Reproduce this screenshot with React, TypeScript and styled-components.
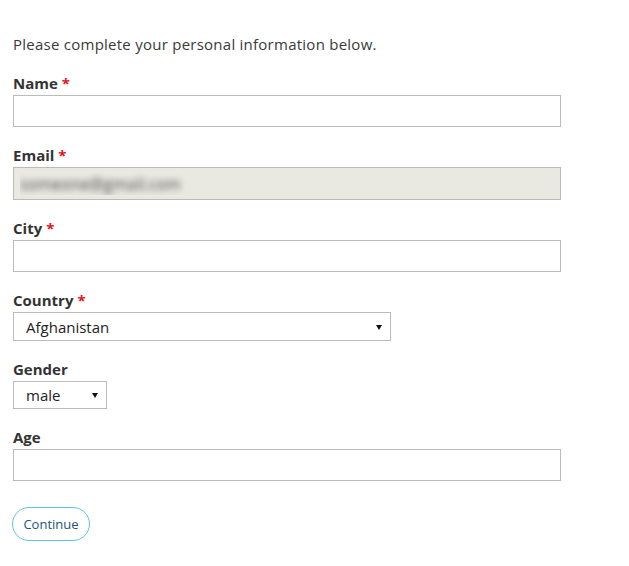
import styled, { createGlobalStyle } from "styled-components";

const GlobalStyle = createGlobalStyle`
	body {
		margin: 0;
		background: #fff;
		font-family: "Open Sans", "DejaVu Sans", sans-serif;
		color: #333;
	}
`;

type Field = {
	label: string;
	required?: boolean;
	kind: "text" | "email" | "select";
	options?: string[];
	width?: number;
	height?: number;
};

const fields: Field[] = [
	{ label: "Name", required: true, kind: "text" },
	{ label: "Email", required: true, kind: "email" },
	{ label: "City", required: true, kind: "text" },
	{ label: "Country", required: true, kind: "select", options: ["Afghanistan"], width: 378, height: 29 },
	{ label: "Gender", kind: "select", options: ["male", "female"], width: 94, height: 28 },
	{ label: "Age", kind: "text" },
];

export const App = () => {
	return (
		<>
			<GlobalStyle />
			<Page>
				<Intro>Please complete your personal information below.</Intro>
				<Form onSubmit={(e) => e.preventDefault()}>
					{fields.map((f) => (
						<Group key={f.label}>
							<Label>
								{f.label}
								{f.required && <Star>*</Star>}
							</Label>
							{f.kind === "select" ? (
								<SelectWrap $width={f.width ?? 378}>
									<Select $height={f.height ?? 29} defaultValue={f.options?.[0]}>
										{f.options?.map((o) => (
											<option key={o}>{o}</option>
										))}
									</Select>
								</SelectWrap>
							) : f.kind === "email" ? (
								<Blurred readOnly defaultValue="someone@gmail.com" />
							) : (
								<Input type="text" />
							)}
						</Group>
					))}
					<Button type="submit">Continue</Button>
				</Form>
			</Page>
		</>
	);
};

export default App;

const Page = styled.div`
	padding: 34px 13px 20px;
	width: 548px;
`;

const Intro = styled.p`
	margin: 0 0 19px;
	font-size: 15px;
	line-height: 20px;
	letter-spacing: 0.25px;
	color: #3a3a3a;
`;

const Form = styled.form`
	display: flex;
	flex-direction: column;
	gap: 18px;
`;

const Group = styled.div`
	display: flex;
	flex-direction: column;
	gap: 2px;
`;

const Label = styled.label`
	font-size: 15px;
	font-weight: 700;
	line-height: 20px;
	color: #333;
`;

const Star = styled.span`
	color: #e0141e;
	margin-left: 4px;
`;

const Input = styled.input`
	box-sizing: border-box;
	width: 548px;
	height: 32px;
	border: 1px solid #bbb;
	background: #fff;
	padding: 0 12px;
	font: inherit;
	font-size: 15px;
	outline: none;
`;

/* address is blurred out in the screenshot */
const Blurred = styled(Input)`
	height: 33px;
	background: #e9e8e1;
	padding-left: 6px;
	font-size: 16px;
	color: transparent;
	text-shadow: 0 0 6px rgba(70, 70, 70, 0.95);
`;

const SelectWrap = styled.div<{ $width: number }>`
	position: relative;
	width: ${(p) => p.$width}px;

	&::after {
		content: "";
		position: absolute;
		right: 9px;
		top: 50%;
		margin-top: -2px;
		border-left: 3px solid transparent;
		border-right: 3px solid transparent;
		border-top: 5px solid #111;
		pointer-events: none;
	}
`;

const Select = styled.select<{ $height: number }>`
	box-sizing: border-box;
	width: 100%;
	height: ${(p) => p.$height}px;
	appearance: none;
	border: 1px solid #bbb;
	border-radius: 0;
	background: #fff;
	padding: 0 20px 0 12px;
	font: inherit;
	font-size: 15px;
	color: #222;
	outline: none;
`;

const Button = styled.button`
	align-self: flex-start;
	margin-top: 8px;
	margin-left: -1px;
	height: 34px;
	width: 78px;
	border: 1px solid #5cc6e0;
	border-radius: 17px;
	background: #fff;
	color: #1d5478;
	font: inherit;
	font-size: 13px;
	cursor: pointer;
`;
